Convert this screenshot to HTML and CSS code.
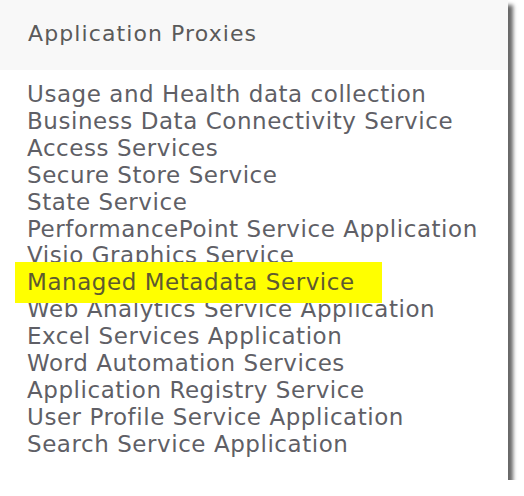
FILE: index.html
```html
<!DOCTYPE html>
<html lang="en">
<head>
    <meta charset="UTF-8">
    <title>Application Proxies</title>
    <link rel="stylesheet" href="styles.css">
</head>
<body>

<!-- Proxies panel -->
<div class="panel">
    <div class="panel-header">Application Proxies</div>
    <ul class="proxy-list">
        <li>Usage and Health data collection</li>
        <li>Business Data Connectivity Service</li>
        <li>Access Services</li>
        <li>Secure Store Service</li>
        <li>State Service</li>
        <li>PerformancePoint Service Application</li>
        <li>Visio Graphics Service</li>
        <li class="marked"><span>Managed Metadata Service</span></li>
        <li>Web Analytics Service Application</li>
        <li>Excel Services Application</li>
        <li>Word Automation Services</li>
        <li>Application Registry Service</li>
        <li>User Profile Service Application</li>
        <li>Search Service Application</li>
    </ul>
</div>

</body>
</html>
```
FILE: styles.css
```css
body {
    margin: 0;
    background-color: white;
    font-family: "DejaVu Sans", Verdana, sans-serif;
}

.panel {
    width: 508px;
    height: 480px;
    background-color: white;
    box-shadow: 5px 5px 4px rgba(0, 0, 0, 0.6);
}

.panel-header {
    height: 70px;
    box-sizing: border-box;
    padding: 21px 0 0 28px;
    background-color: #f8f8f8;
    color: #5a5a5a;
    font-size: 22px;
    letter-spacing: 1.1px;
}

.proxy-list {
    list-style: none;
    margin: 0;
    padding: 11px 0 0 27px;
    color: #5f5f66;
    font-size: 23px;
    letter-spacing: 0.55px;
    line-height: 26.9px;
}

.proxy-list .marked {
    position: relative;
}

.proxy-list .marked::before {
    content: "";
    position: absolute;
    left: -12px;
    top: -7px;
    width: 367px;
    height: 41px;
    background-color: #ffff00;
}

.proxy-list .marked span {
    position: relative;
    color: #5e5a30;
}
```
